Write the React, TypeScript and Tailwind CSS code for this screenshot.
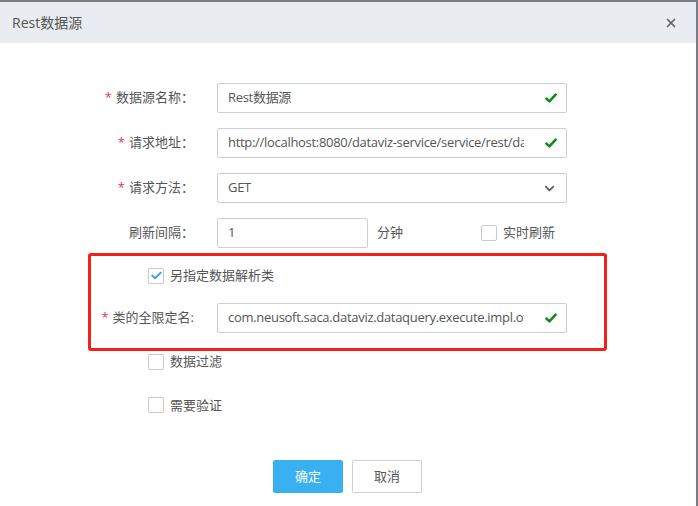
import { ChevronDown, X } from "lucide-react";
import type { ReactNode } from "react";

const font = { fontFamily: '"Open Sans", "Noto Sans CJK SC", sans-serif' };

function Check() {
  return (
    <svg width="12" height="10" viewBox="0 0 12 10" className="shrink-0">
      <path d="M1.4 5.6 L4.4 8.4 L10.6 1.6" fill="none" stroke="#138a1c" strokeWidth="2.6" strokeLinecap="round" strokeLinejoin="round" />
    </svg>
  );
}

function Box({ checked }: { checked?: boolean }) {
  return (
    <span className="flex h-4 w-4 shrink-0 items-center justify-center rounded-[2px] border border-[#c4cbd4] bg-white">
      {checked ? (
        <svg width="11" height="9" viewBox="0 0 11 9">
          <path d="M1.3 4.6 L4 7.2 L9.7 1.6" fill="none" stroke="#3a9ff0" strokeWidth="2" strokeLinecap="round" strokeLinejoin="round" />
        </svg>
      ) : null}
    </span>
  );
}

function Label({ w, star, children }: { w: string; star?: boolean; children: ReactNode }) {
  return (
    <div className={`${w} shrink-0 whitespace-nowrap text-right text-[13px] text-[#555]`}>
      {star ? <span className="mr-[4px] text-[#e4393c]">*</span> : null}
      {children}
    </div>
  );
}

function Field({ value, w = "w-[350px]", check, select }: { value: string; w?: string; check?: boolean; select?: boolean }) {
  return (
    <div className={`${w} flex h-[30px] items-center rounded-[2px] border border-[#c9d0d8] bg-white pl-[10px] pr-[9px]`}>
      <span className="w-[296px] min-w-0 overflow-hidden whitespace-nowrap text-[13px] tracking-[-0.3px] text-[#555]">{value}</span>
      <span className="flex-1" />
      {check ? <Check /> : null}
      {select ? <ChevronDown size={15} strokeWidth={2.5} className="text-[#555]" /> : null}
    </div>
  );
}

export default function App() {
  return (
    <div className="h-[506px] w-[698px] overflow-hidden border-r-2 border-t-2 border-[#787d83] bg-white" style={font}>
      <header className="flex h-[41px] items-center justify-between bg-[#e9ecf0] pl-[12px] pr-[18px]">
        <h1 className="text-[14px] text-[#555]">Rest数据源</h1>
        <X size={14} strokeWidth={3} className="text-[#666]" />
      </header>

      <div className="flex flex-col pt-[40px]">
        <div className="flex items-center">
          <Label w="w-[194px]" star>数据源名称：</Label>
          <div className="ml-[23px]"><Field value="Rest数据源" check /></div>
        </div>
        <div className="mt-[15px] flex items-center">
          <Label w="w-[194px]" star>请求地址：</Label>
          <div className="ml-[23px]"><Field value="http://localhost:8080/dataviz-service/service/rest/data" check /></div>
        </div>
        <div className="mt-[15px] flex items-center">
          <Label w="w-[194px]" star>请求方法：</Label>
          <div className="ml-[23px]"><Field value="GET" select /></div>
        </div>
        <div className="mt-[15px] flex items-center">
          <Label w="w-[194px]">刷新间隔：</Label>
          <div className="ml-[23px]"><Field value="1" w="w-[151px]" /></div>
          <span className="ml-[9px] text-[13px] text-[#555]">分钟</span>
          <div className="ml-[78px] flex items-center gap-[6px]">
            <Box />
            <span className="text-[13px] text-[#555]">实时刷新</span>
          </div>
        </div>

        <div className="ml-[88px] mt-[5px] flex h-[98px] w-[519px] flex-col rounded-[3px] border-[3px] border-[#f5201a]">
          <div className="ml-[57px] mt-[10px] flex items-center gap-[6px]">
            <Box checked />
            <span className="text-[13px] text-[#555]">另指定数据解析类</span>
          </div>
          <div className="mt-[17px] flex items-center">
            <Label w="w-[103px]" star>类的全限定名:</Label>
            <div className="ml-[23px]"><Field value="com.neusoft.saca.dataviz.dataquery.execute.impl.other" check /></div>
          </div>
        </div>

        <div className="ml-[148px] mt-[1px] flex items-center gap-[6px]">
          <Box />
          <span className="text-[13px] text-[#555]">数据过滤</span>
        </div>
        <div className="ml-[148px] mt-[24px] flex items-center gap-[6px]">
          <Box />
          <span className="text-[13px] text-[#555]">需要验证</span>
        </div>

        <div className="ml-[273px] mt-[45px] flex gap-[9px]">
          <button className="h-[33px] w-[70px] rounded-[2px] bg-[#38b0f2] text-[13px] text-white">确定</button>
          <button className="h-[33px] w-[70px] rounded-[2px] border border-[#c9d0d8] bg-white text-[13px] text-[#555]">取消</button>
        </div>
      </div>
    </div>
  );
}
